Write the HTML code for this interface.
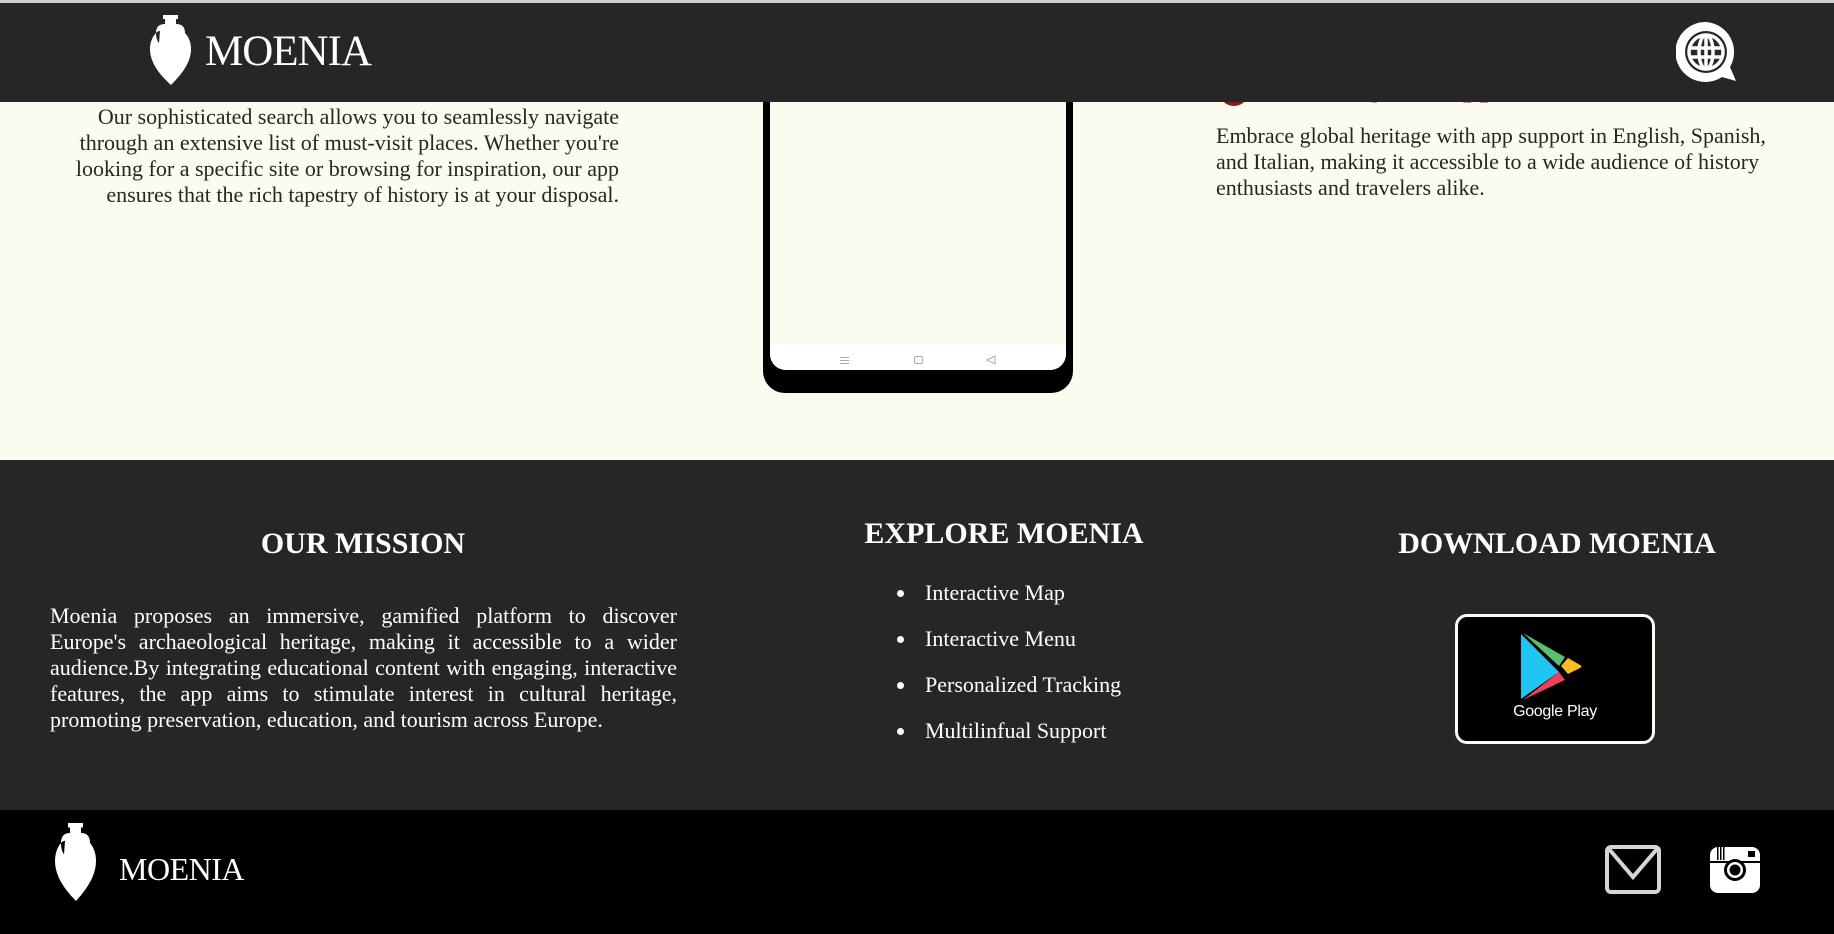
<!DOCTYPE html>
<html><head><meta charset="utf-8"><style>
*{margin:0;padding:0;box-sizing:border-box}
body{width:1834px;height:934px;overflow:hidden;background:#fbfbf0;font-family:"Liberation Serif",serif;position:relative}
.abs{position:absolute}
.hdr{left:0;top:0;width:1834px;height:102px;background:#282527;border-top:3px solid #cfcfcf;z-index:5}
.logo{font-family:"Liberation Serif",serif;color:#fff;white-space:nowrap;transform-origin:left top}
p{color:#282527}
.dark{left:0;top:460px;width:1834px;height:351px;background:#282527}
.foot{left:0;top:810px;width:1834px;height:124px;background:#000}
h2{position:absolute;color:#fff;font-size:30px;font-weight:bold;text-align:center;white-space:nowrap}
ul{list-style:none}
li{position:absolute;color:#fff;font-size:22px;left:925px;white-space:nowrap}
li:before{content:"";position:absolute;left:-28px;top:10px;width:7px;height:7px;border-radius:50%;background:#fff}
.z{z-index:6}
</style></head><body>
<div class="abs hdr"></div>
<svg class="abs z" style="left:150px;top:15px" width="41" height="70" viewBox="0 0 41 70"><path fill="#fff" d="M13 0h15v4h-2v5c6 0 9 3 9 9 4 4 6 10 6 16 0 14-10 26-20 36C10 60 0 48 0 34c0-6 2-12 6-16 0-6 3-9 9-9V4h-2z M6 18c0 4 1 8 3 10l1-12c-2 0-3 1-4 2z M35 18c0 4-1 8-3 10l-1-12c2 0 3 1 4 2z"/></svg>
<div class="abs logo z" style="left:205px;top:27px;font-size:43px;letter-spacing:-1px">MOENIA</div>
<svg class="abs z" style="left:1676px;top:22px" width="61" height="61" viewBox="0 0 61 61"><path fill="#fff" d="M30 0a30 30 0 1 0 16 55l14 4-6-14A30 30 0 0 0 30 0z"/><circle cx="30" cy="30" r="21" fill="#282527"/><g fill="none" stroke="#fff" stroke-width="3.5"><circle cx="30" cy="30" r="17"/><ellipse cx="30" cy="30" rx="7" ry="17"/><line x1="30" y1="13" x2="30" y2="47"/><line x1="13" y1="26" x2="47" y2="26"/><line x1="13" y1="35" x2="47" y2="35"/></g></svg>

<p class="abs" style="left:40px;top:104px;width:579px;text-align:right;font-size:22px;line-height:26px">Our sophisticated search allows you to seamlessly navigate through an extensive list of must-visit places. Whether you're looking for a specific site or browsing for inspiration, our app ensures that the rich tapestry of history is at your disposal.</p>

<div class="abs" style="left:763px;top:60px;width:310px;height:333px;background:#000;border-radius:0 0 22px 22px"></div>
<div class="abs" style="left:770px;top:60px;width:296px;height:310px;background:#fbfbf0;border-radius:0 0 16px 16px;overflow:hidden">
<div style="position:absolute;left:0;top:284px;width:296px;height:26px;background:#fff"></div>
<div style="position:absolute;left:70px;top:297px;width:9px;height:1px;background:#aaa;box-shadow:0 3px 0 #aaa,0 6px 0 #aaa"></div>
<div style="position:absolute;left:144px;top:296px;width:9px;height:8px;border:1px solid #aaa;border-radius:2px"></div>
<svg style="position:absolute;left:216px;top:295px" width="10" height="10"><path d="M9 1L1 5l8 4z" fill="none" stroke="#aaa"/></svg>
</div>

<div class="abs" style="left:1219px;top:76px;width:30px;height:30px;border-radius:50%;background:#8b1a1a"></div>
<div class="abs" style="left:1262px;top:70px;color:#8b1a1a;font-weight:bold;font-size:30px;white-space:nowrap">Multilingual Support</div>
<p class="abs" style="left:1216px;top:123px;width:575px;font-size:22px;line-height:26px">Embrace global heritage with app support in English, Spanish, and Italian, making it accessible to a wide audience of history enthusiasts and travelers alike.</p>

<div class="abs dark"></div>
<h2 style="left:163px;width:400px;top:527px">OUR MISSION</h2>
<h2 style="left:804px;width:400px;top:517px">EXPLORE MOENIA</h2>
<h2 style="left:1357px;width:400px;top:527px">DOWNLOAD MOENIA</h2>
<p class="abs" style="left:50px;top:603px;width:627px;text-align:justify;color:#fff;font-size:22px;line-height:26px">Moenia proposes an immersive, gamified platform to discover Europe's archaeological heritage, making it accessible to a wider audience.By integrating educational content with engaging, interactive features, the app aims to stimulate interest in cultural heritage, promoting preservation, education, and tourism across Europe.</p>
<ul><li style="top:580px">Interactive Map</li><li style="top:626px">Interactive Menu</li><li style="top:672px">Personalized Tracking</li><li style="top:718px">Multilinfual Support</li></ul>

<div class="abs" style="left:1455px;top:614px;width:200px;height:130px;background:#000;border:3px solid #fbfbf0;border-radius:12px"></div>
<svg class="abs" style="left:1519px;top:633px" width="72" height="68" viewBox="0 0 72 68"><path d="M2 1l38 38L2 66z" fill="#20c4f0"/><path d="M4 0l42 24-6 9z" fill="#5bbf70"/><path d="M4 67l36-28 6 8z" fill="#ee3f5b"/><path d="M42 33l7-8 12 7c2 1 2 2 0 3l-12 6z" fill="#fbbc24"/></svg>
<div class="abs" style="left:1455px;top:703px;width:200px;text-align:center;color:#fff;font-family:'Liberation Sans',sans-serif;font-size:16px;letter-spacing:-0.3px">Google Play</div>

<div class="abs foot"></div>
<svg class="abs" style="left:55px;top:823px" width="41" height="78" viewBox="0 0 41 70" preserveAspectRatio="none"><path fill="#fff" d="M13 0h15v4h-2v5c6 0 9 3 9 9 4 4 6 10 6 16 0 14-10 26-20 36C10 60 0 48 0 34c0-6 2-12 6-16 0-6 3-9 9-9V4h-2z M6 18c0 4 1 8 3 10l1-12c-2 0-3 1-4 2z M35 18c0 4-1 8-3 10l-1-12c2 0 3 1 4 2z"/></svg>
<div class="abs logo" style="left:119px;top:851px;font-size:32px;letter-spacing:-0.5px">MOENIA</div>
<svg class="abs" style="left:1605px;top:845px" width="56" height="49" viewBox="0 0 56 49"><rect x="2" y="2" width="52" height="45" rx="4" fill="none" stroke="#d6d6d6" stroke-width="4"/><path d="M4 4l24 28L52 4" fill="none" stroke="#d6d6d6" stroke-width="4"/></svg>
<svg class="abs" style="left:1710px;top:847px" width="50" height="46" viewBox="0 0 50 46"><rect x="0" y="0" width="50" height="46" rx="8" fill="#fff"/><rect x="0" y="14" width="50" height="2" fill="#000"/><circle cx="25" cy="23" r="11" fill="#000"/><circle cx="25" cy="23" r="8" fill="#fff"/><circle cx="25" cy="23" r="5.5" fill="#000"/><rect x="38" y="4" width="7" height="6" fill="#000"/><rect x="7" y="0" width="1.5" height="13" fill="#000"/><rect x="10" y="0" width="1.5" height="13" fill="#000"/><rect x="13" y="0" width="1.5" height="13" fill="#000"/></svg>
</body></html>
